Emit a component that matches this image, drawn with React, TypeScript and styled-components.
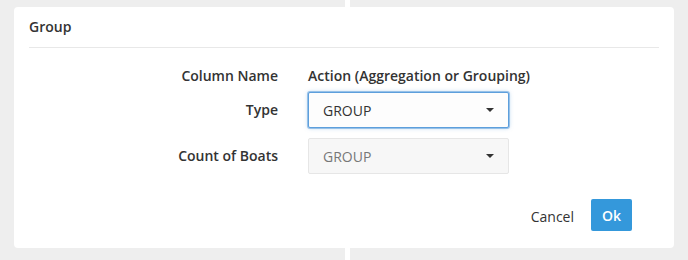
import React from "react";
import styled, { createGlobalStyle, css } from "styled-components";

const GlobalStyle = createGlobalStyle`
  html, body {
    margin: 0;
    padding: 0;
    background: #eeeeee;
  }
  body {
    font-family: "Open Sans", "Noto Sans", Arial, sans-serif;
    font-size: 14px;
    color: #333;
  }
  * {
    box-sizing: border-box;
  }
`;

// Fond avec la barre de séparation blanche derrière la fenêtre
const Page = styled.div`
  height: 260px;
  padding: 7px 14px 12px 14px;
  background: linear-gradient(
    to right,
    #eeeeee 345px,
    #ffffff 345px,
    #ffffff 350px,
    #eeeeee 350px
  );
`;

const Card = styled.div`
  height: 241px;
  background: #fff;
  border-radius: 4px;
  padding: 0 15px;
  display: flex;
  flex-direction: column;
`;

const Header = styled.div`
  height: 41px;
  display: flex;
  align-items: center;
  border-bottom: 1px solid #e8e8e8;
  font-size: 14px;
  font-weight: 600;
  color: #333;
  padding-bottom: 1px;
`;

const Form = styled.div`
  display: grid;
  grid-template-columns: 249px 201px;
  column-gap: 30px;
  align-items: center;
  padding-top: 18px;
`;

const Label = styled.div<{ $gap?: number }>`
  text-align: right;
  font-weight: 600;
  line-height: 20px;
  color: #333;
  margin-bottom: ${(p) => p.$gap ?? 0}px;
`;

const HeadCell = styled.div`
  font-weight: 600;
  line-height: 20px;
  white-space: nowrap;
  margin-bottom: 6px;
`;

const Select = styled.div<{ $focused?: boolean; $disabled?: boolean; $gap?: number }>`
  position: relative;
  height: 36px;
  display: flex;
  align-items: center;
  padding: 0 30px 0 14px;
  border-radius: 2px;
  border: 1px solid #d9d9d9;
  background: #fff;
  color: #333;
  margin-bottom: ${(p) => p.$gap ?? 0}px;

  ${(p) =>
    p.$focused &&
    css`
      border-color: #5d9fdc;
      box-shadow: 0 0 0 1px rgba(93, 159, 220, 0.55), 0 0 4px rgba(93, 159, 220, 0.5);
      background: #fdfdfd;
    `}

  ${(p) =>
    p.$disabled &&
    css`
      border-color: #e6e6e6;
      background: #f7f7f7;
      color: #777;
    `}
`;

const Caret = styled.span`
  position: absolute;
  right: 14px;
  top: 50%;
  margin-top: -2px;
  width: 0;
  height: 0;
  border-left: 4px solid transparent;
  border-right: 4px solid transparent;
  border-top: 4px solid #333;
`;

const Footer = styled.div`
  display: flex;
  justify-content: flex-end;
  align-items: center;
  padding: 25px 27px 0 0;
`;

const TextButton = styled.button`
  border: none;
  background: none;
  padding: 0;
  margin: 2px 17px 0 0;
  font-family: inherit;
  font-size: 14px;
  color: #333;
  cursor: pointer;
`;

const PrimaryButton = styled.button`
  height: 32px;
  width: 41px;
  border: none;
  border-radius: 2px;
  background: #3498db;
  color: #fff;
  font-family: inherit;
  font-size: 14px;
  font-weight: 600;
  cursor: pointer;
  padding: 0;

  &:hover {
    background: #2a8bcc;
  }
`;

const App = () => {
  return (
    <>
      <GlobalStyle />
      <Page>
        <Card>
          <Header>Group</Header>
          <Form>
            <Label $gap={6}>Column Name</Label>
            <HeadCell>Action (Aggregation or Grouping)</HeadCell>

            <Label $gap={10}>Type</Label>
            <Select $focused $gap={10}>
              GROUP
              <Caret />
            </Select>

            <Label>Count of Boats</Label>
            <Select $disabled>
              GROUP
              <Caret />
            </Select>
          </Form>
          <Footer>
            <TextButton>Cancel</TextButton>
            <PrimaryButton>Ok</PrimaryButton>
          </Footer>
        </Card>
      </Page>
    </>
  );
};

export default App;
